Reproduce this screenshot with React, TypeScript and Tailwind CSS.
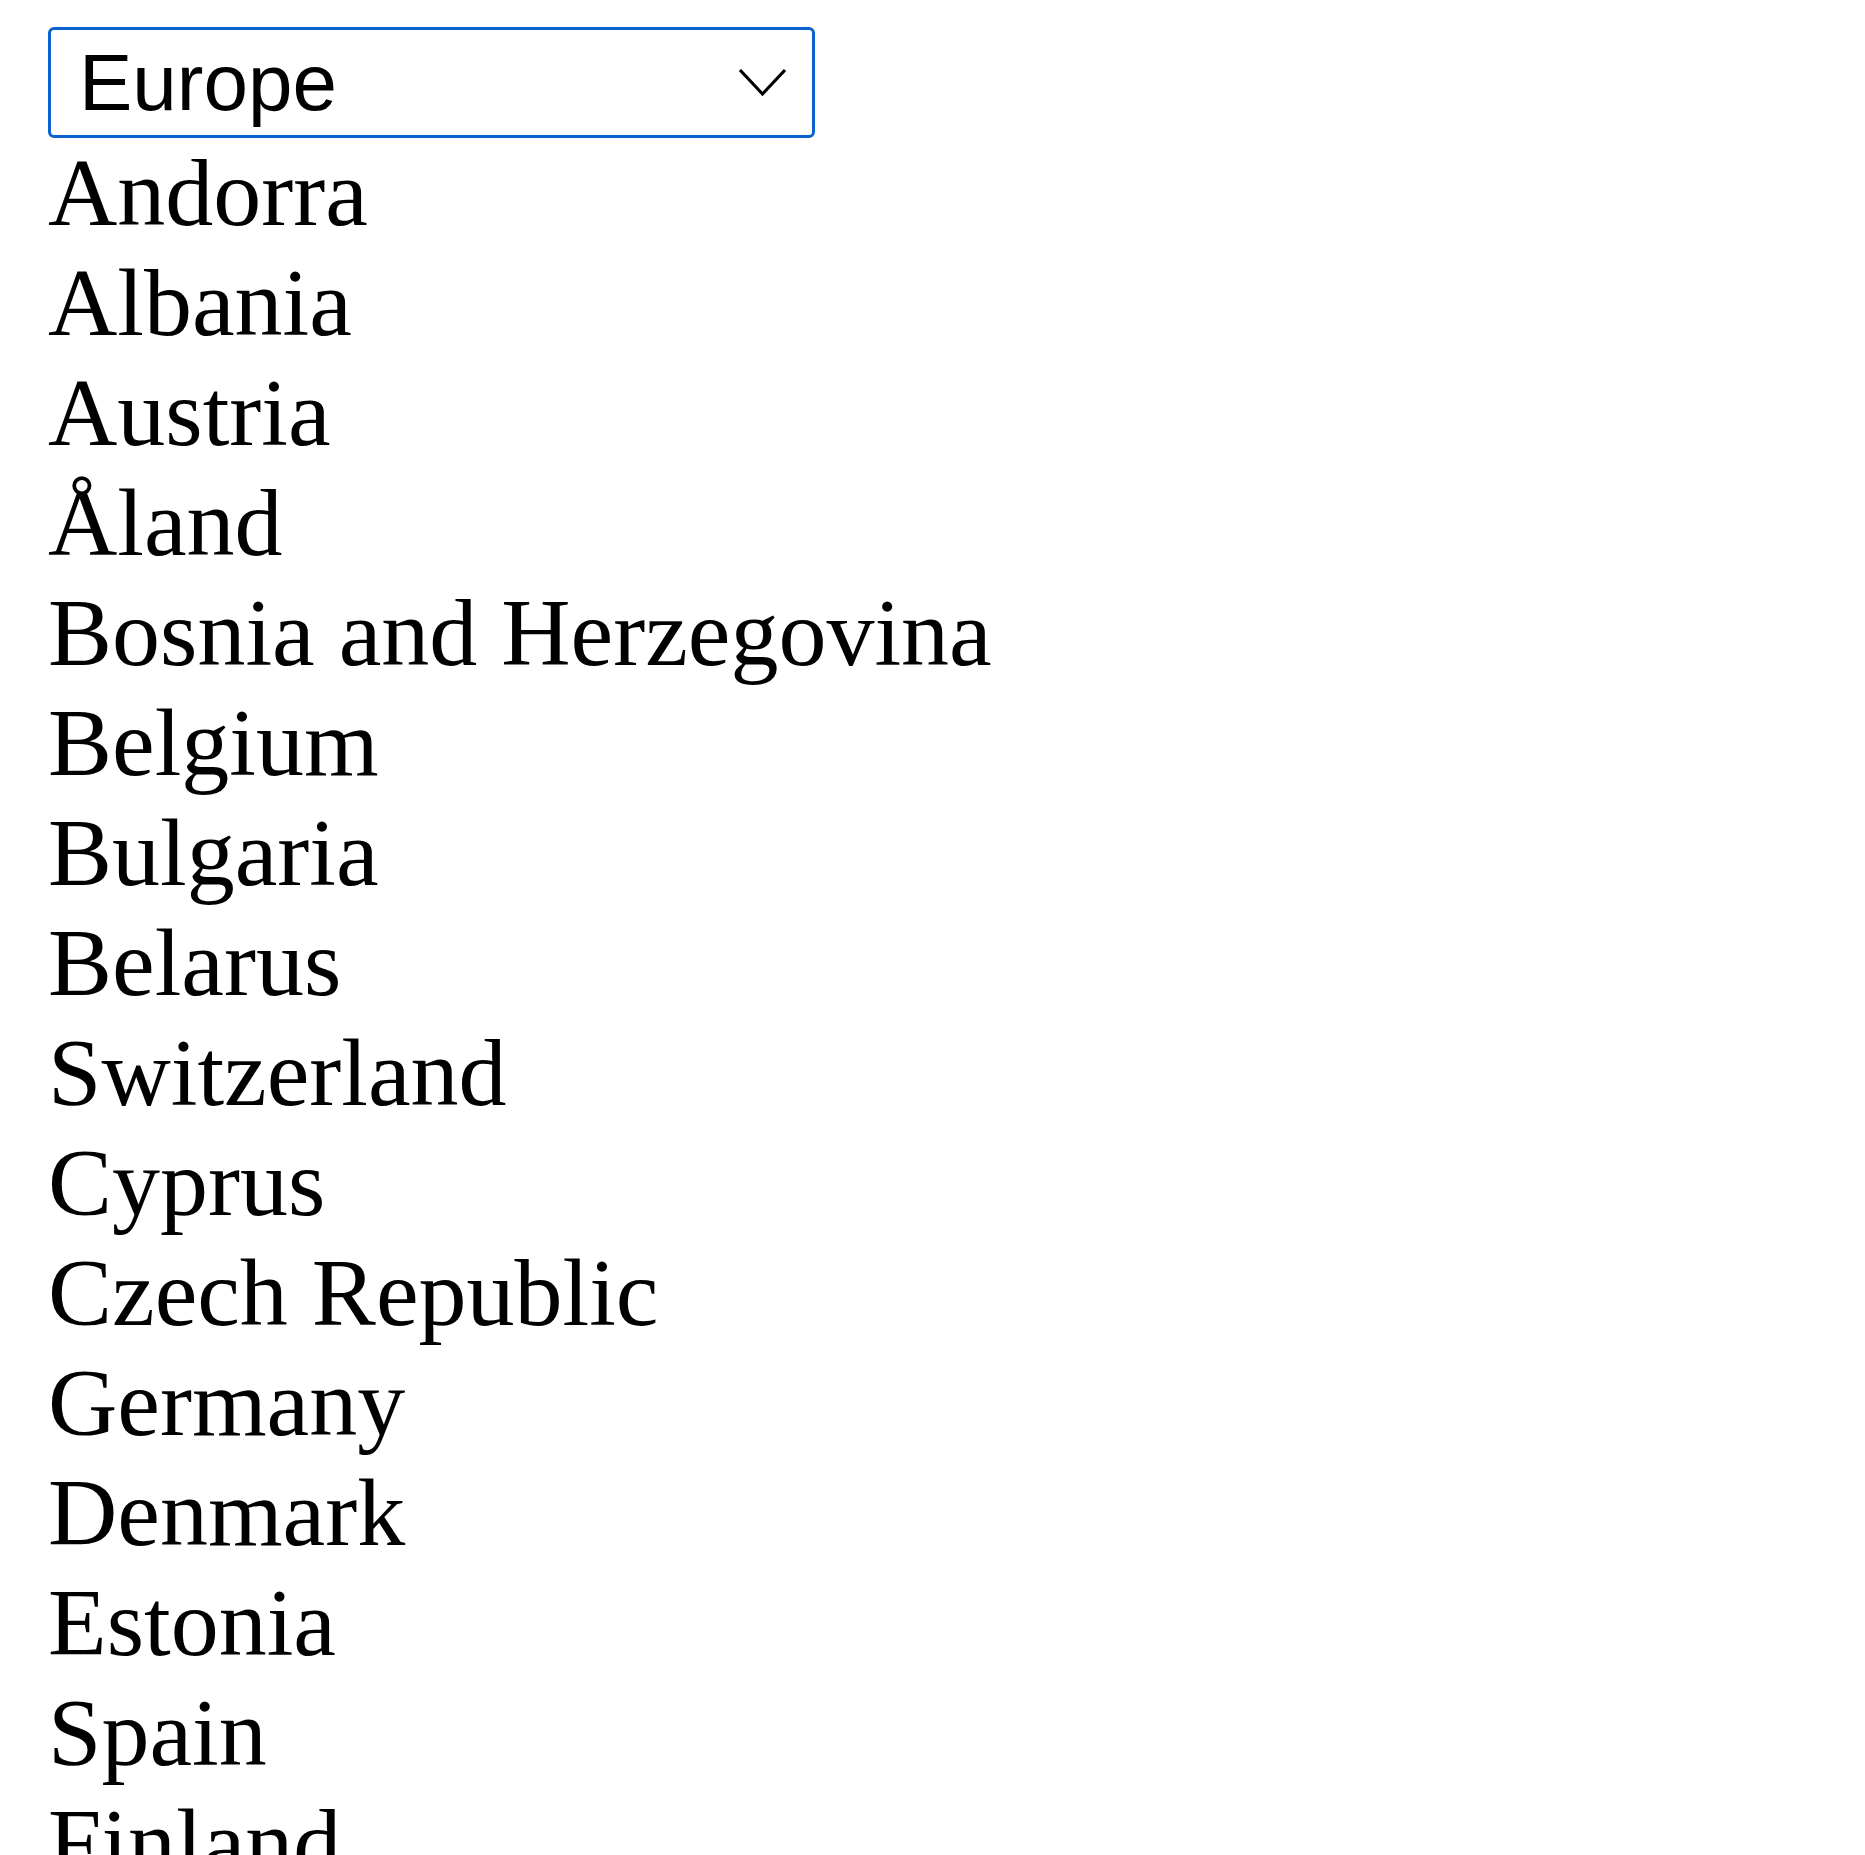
import React from "react";

const countries = [
  "Andorra",
  "Albania",
  "Austria",
  "Åland",
  "Bosnia and Herzegovina",
  "Belgium",
  "Bulgaria",
  "Belarus",
  "Switzerland",
  "Cyprus",
  "Czech Republic",
  "Germany",
  "Denmark",
  "Estonia",
  "Spain",
  "Finland",
  "Faroe Islands",
  "France",
  "United Kingdom",
  "Guernsey",
  "Gibraltar",
  "Greece",
];

export default function App() {
  return (
    <div className="min-h-screen bg-white pl-[48px] pt-[27px] text-black">
      <div className="flex h-[111px] w-[767px] items-center rounded-[6px] border-[3px] border-[#0b63ce] pl-[28px] pr-[25px]">
        <span className="text-[80px] leading-none" style={{ fontFamily: '"Liberation Sans", Arial, sans-serif' }}>
          Europe
        </span>
        <svg className="ml-auto" width="49" height="30" viewBox="0 0 49 30" fill="none">
          <path d="M2 2 L24.5 26 L47 2" stroke="#000" strokeWidth="3.2" />
        </svg>
      </div>
      <div className="text-[96px] leading-[110px]" style={{ fontFamily: '"Liberation Serif", "Times New Roman", serif' }}>
        {countries.map((c) => (
          <div key={c}>{c}</div>
        ))}
      </div>
    </div>
  );
}
